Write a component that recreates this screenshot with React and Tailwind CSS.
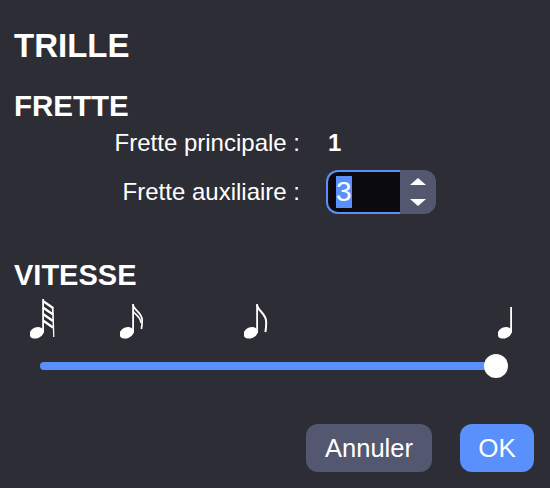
import React from "react";

// note head + stem, flags go in as children
function Note({ stemTop = 8, children }) {
  return (
    <svg width="28" height="42" viewBox="0 0 28 42">
      <ellipse cx="6.6" cy="34.8" rx="7.4" ry="5.4" transform="rotate(-24 6.6 34.8)" fill="white" />
      <rect x="12.2" y={stemTop} width="1.8" height={35 - stemTop} fill="white" />
      {children}
    </svg>
  );
}

function Spinner() {
  return (
    <div className="w-[36px] h-[44px] bg-[#535870] rounded-r-[12px] flex flex-col items-center justify-center gap-[14px]">
      <svg width="16" height="7" viewBox="0 0 16 7">
        <path d="M8 0 L16 7 L0 7 Z" fill="white" />
      </svg>
      <svg width="16" height="7" viewBox="0 0 16 7">
        <path d="M0 0 L16 0 L8 7 Z" fill="white" />
      </svg>
    </div>
  );
}

export default function App() {
  return (
    <div className="w-[550px] h-[488px] bg-[#2c2d35] text-white font-['Liberation_Sans',sans-serif] overflow-hidden flex flex-col px-[14px]">
      <h1 className="text-[33px] leading-[36px] font-bold mt-[28px]">TRILLE</h1>
      <h2 className="text-[29.5px] leading-[32px] font-bold mt-[26px]">FRETTE</h2>

      <div className="flex items-center h-[28px] mt-[7px]">
        <span className="w-[286px] text-right text-[24px] leading-[28px]">Frette principale :</span>
        <span className="ml-[28px] text-[24px] leading-[28px] font-bold">1</span>
      </div>

      <div className="flex items-center mt-[13px]">
        <span className="w-[286px] text-right text-[24px] leading-[28px]">Frette auxiliaire :</span>
        <div className="ml-[26px] flex">
          <div className="w-[74px] h-[44px] bg-[#0b0b0f] border-2 border-r-0 border-[#5a90fb] rounded-l-[12px] flex items-center pl-[8px]">
            <span className="bg-[#5a90fb] text-[28px] leading-[32px] text-white">3</span>
          </div>
          <Spinner />
        </div>
      </div>

      <h2 className="text-[29px] leading-[32px] font-bold mt-[45px]">VITESSE</h2>

      <div className="flex mt-[7px] pl-[16px]">
        <Note stemTop={1}>
          <g fill="none" stroke="white" strokeWidth="2.3">
            <path d="M13 3 L23 10" />
            <path d="M13 9.5 L23 16.5" />
            <path d="M13 16 L23 23" />
            <path d="M13 22.5 L23 29.5" />
          </g>
          <path d="M21.8 9 L23.6 9 L24.4 39 L23.2 39 Z" fill="white" />
        </Note>
        <div className="ml-[62px]">
          <Note stemTop={6}>
            <g fill="none" stroke="white">
              <path d="M13 7 C14 12 22.4 15 22.2 22 C22.2 25 22 28 21.4 31" strokeWidth="1.7" />
              <path d="M13 13 C15 17 20.5 18 21 25" strokeWidth="1.6" />
            </g>
          </Note>
        </div>
        <div className="ml-[96px]">
          <Note stemTop={6}>
            <path d="M13 7 C14 13 22.4 16 22.2 24 C22.2 28 22 31 21.4 34" fill="none" stroke="white" strokeWidth="2" />
          </Note>
        </div>
        <div className="ml-[226px]">
          <Note stemTop={9} />
        </div>
      </div>

      <div className="flex items-center ml-[26px] w-[468px] mt-[14px]">
        <div className="flex-1 h-[8px] bg-[#5a90fb] rounded-l-full" />
        <div className="w-[24px] h-[24px] rounded-full bg-white -ml-[12px] shrink-0" />
      </div>

      <div className="flex justify-end gap-[28px] mt-[46px] pr-[2px]">
        <button className="w-[126px] h-[48px] rounded-[12px] bg-[#535870] text-[25.5px]">Annuler</button>
        <button className="w-[74px] h-[48px] rounded-[12px] bg-[#5a90fb] text-[26px]">OK</button>
      </div>
    </div>
  );
}
